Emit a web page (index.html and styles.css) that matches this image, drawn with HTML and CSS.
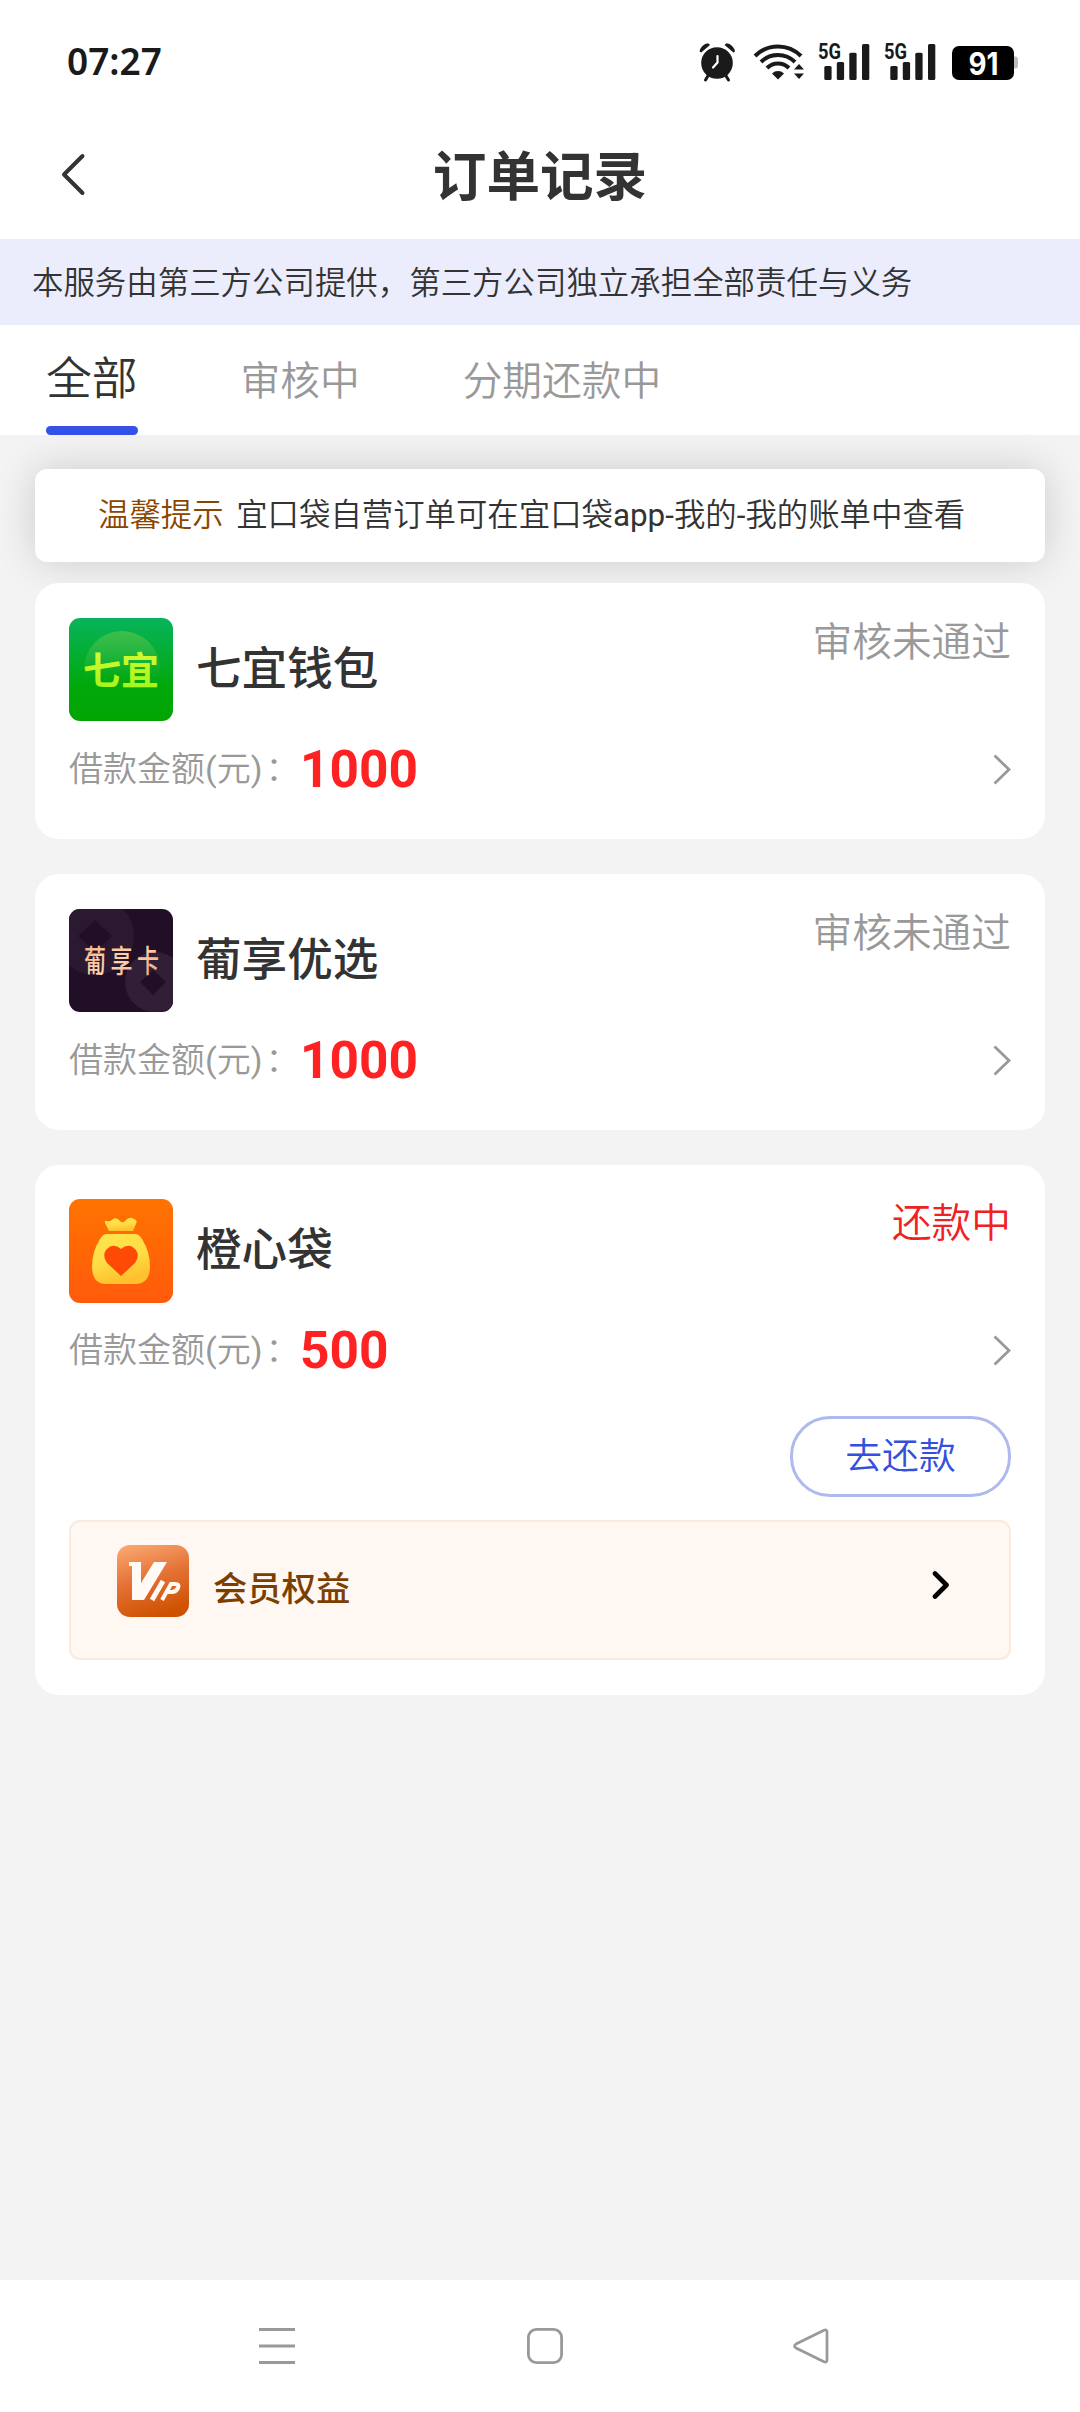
FILE: index.html
```html
<!DOCTYPE html>
<html lang="zh-CN">
<head>
<meta charset="utf-8">
<title>订单记录</title>
<link rel="stylesheet" href="styles.css">
</head>
<body>
<div class="screen">
  <div class="status-bar">
    <span class="clock">07:27</span>
    <svg class="status-icons" width="320" height="50" viewBox="698 37 320 50">
      <g fill="#1a1a1a" stroke="none">
        <circle cx="717" cy="63" r="15.8"/>
        <path d="M699.6 51.5a9.5 9.5 0 0 1 8.6-8.2l1.8 1.6-8.8 7.6z"/>
        <path d="M735 51.500a9.500 9.500 0 0 0-8.600-8.200l-1.800 1.600 8.800 7.600z"/>
      </g>
      <path d="M708.500 75l-3 5M725.500 75l3 5" stroke="#1a1a1a" stroke-width="3" stroke-linecap="round"/>
      <path d="M717.500 56v6.500l-4.500 5" fill="none" stroke="#fff" stroke-width="2.200" stroke-linecap="round"/>
      <g fill="none" stroke="#1a1a1a" stroke-width="4">
        <path d="M755 56a32.500 32.500 0 0 1 46 0"/>
        <path d="M761 62a24 24 0 0 1 34 0"/>
        <path d="M767 68a15.500 15.500 0 0 1 22 0"/>
      </g>
      <path d="M772 73.500a8.500 8.500 0 0 1 12 0l-6 6z" fill="#1a1a1a"/>
      <path d="M794 69.500l5-5.500 5 5.500zM794 73.500l5 5.500 5-5.500z" fill="#1a1a1a"/>
      <g id="signal" fill="#1a1a1a">
        <text class="net" x="818" y="58.700" textLength="23" lengthAdjust="spacingAndGlyphs">5G</text>
        <rect x="824.300" y="66" width="7.300" height="14" rx="1.500"/>
        <rect x="836.800" y="62" width="7.300" height="18" rx="1.500"/>
        <rect x="849.300" y="52.800" width="7.300" height="27.200" rx="1.500"/>
        <rect x="862" y="44" width="7.300" height="36" rx="1.500"/>
      </g>
      <use href="#signal" x="66"/>
      <path d="M1014 56.500h1.500a2.500 2.500 0 0 1 2.500 2.500v7a2.500 2.500 0 0 1-2.500 2.500h-1.500z" fill="#bbb"/>
      <rect x="952" y="46" width="62" height="34" rx="7" fill="#000"/>
      <text class="battery" x="968.500" y="74.500" textLength="30" lengthAdjust="spacingAndGlyphs">91</text>
    </svg>
  </div>

  <header class="title-bar">
    <svg class="back" width="26" height="44" viewBox="0 0 26 44"><path d="M22.500 3L4 21.500 22.500 40" fill="none" stroke="#333" stroke-width="4" stroke-linecap="round" stroke-linejoin="round"/></svg>
    <h1 class="title">订单记录</h1>
  </header>

  <div class="notice">本服务由第三方公司提供，第三方公司独立承担全部责任与义务</div>

  <nav class="tabs">
    <span class="tab tab-active">全部</span>
    <span class="tab">审核中</span>
    <span class="tab">分期还款中</span>
  </nav>

  <main class="content">
    <div class="tip"><span class="tip-label">温馨提示</span> 宜口袋自营订单可在宜口袋<span class="latin">app-</span>我的<span class="latin">-</span>我的账单中查看</div>

    <section class="card">
      <div class="card-head">
        <svg class="logo" width="104" height="103" viewBox="0 0 104 103">
          <defs>
            <linearGradient id="green" x1="0" y1="0" x2="0" y2="1"><stop offset="0" stop-color="#08b45c"/><stop offset=".65" stop-color="#02a80c"/><stop offset="1" stop-color="#03a402"/></linearGradient>
            <linearGradient id="glow" x1="0" y1="0" x2="0" y2="1"><stop offset="0" stop-color="#3fbd48"/><stop offset=".6" stop-color="#3fbd48" stop-opacity="0"/></linearGradient>
            <linearGradient id="lime" x1="0" y1="0" x2="0" y2="1"><stop offset="0" stop-color="#e2fb3a"/><stop offset="1" stop-color="#9cf514"/></linearGradient>
          </defs>
          <rect width="104" height="103" fill="url(#green)"/>
          <circle cx="53" cy="51" r="38" fill="url(#glow)"/>
          <text class="logo-green" x="14" y="66" fill="url(#lime)" textLength="76">七宜</text>
        </svg>
        <span class="name">七宜钱包</span>
        <span class="state">审核未通过</span>
      </div>
      <div class="amount-row">
        <span class="label">借款金额<span class="latin">(</span>元<span class="latin">)</span><span class="colon">：</span></span><span class="amount">1000</span>
        <svg class="arrow" width="18" height="31" viewBox="0 0 18 31"><path d="M1.500 1.500L16 15.500 1.500 29.500" fill="none" stroke="#999" stroke-width="2.800"/></svg>
      </div>
    </section>

    <section class="card">
      <div class="card-head">
        <svg class="logo" width="104" height="103" viewBox="0 0 104 103">
          <defs><linearGradient id="peach" x1="0" y1="0" x2="1" y2="1"><stop offset="0" stop-color="#f6b184"/><stop offset=".5" stop-color="#ffd2ab"/><stop offset="1" stop-color="#e89a6d"/></linearGradient></defs>
          <rect width="104" height="103" fill="#210f27"/>
          <circle cx="26" cy="27" r="39" fill="#2b1932"/>
          <path d="M26 11l17 16-17 16-17-16z" fill="#210f27"/>
          <circle cx="86" cy="73" r="30" fill="#311e37"/>
          <path d="M84 61l13 12-13 13-13-13z" fill="#210f27"/>
          <text class="logo-dark" transform="translate(15 63) scale(1 1.400)" fill="url(#peach)">葡享卡</text>
        </svg>
        <span class="name">葡享优选</span>
        <span class="state">审核未通过</span>
      </div>
      <div class="amount-row">
        <span class="label">借款金额<span class="latin">(</span>元<span class="latin">)</span><span class="colon">：</span></span><span class="amount">1000</span>
        <svg class="arrow" width="18" height="31" viewBox="0 0 18 31"><path d="M1.500 1.500L16 15.500 1.500 29.500" fill="none" stroke="#999" stroke-width="2.800"/></svg>
      </div>
    </section>

    <section class="card card-due">
      <div class="card-head">
        <svg class="logo" width="104" height="104" viewBox="0 0 104 104">
          <defs>
            <linearGradient id="orange" x1="0" y1="0" x2="0" y2="1"><stop offset="0" stop-color="#ff7300"/><stop offset="1" stop-color="#ff5a0c"/></linearGradient>
            <linearGradient id="gold" x1="0" y1="0" x2=".3" y2="1"><stop offset="0" stop-color="#ffe64d"/><stop offset=".6" stop-color="#ffdc44"/><stop offset="1" stop-color="#ffc02e"/></linearGradient>
          </defs>
          <rect width="104" height="104" fill="url(#orange)"/>
          <path d="M40 32l-4-8q-1-3 2-2 3 1 6-2 4-2 7 2 3 3 6-1 4-4 8-1 4 1 2 5l-3 7z" fill="url(#gold)"/>
          <path d="M38 35h28q4 0 7 5 8 13 8 27 0 18-15 18H37q-14 0-14-18 0-14 8-27 3-5 7-5z" fill="url(#gold)"/>
          <path d="M52 77L38 64q-5-7-1-13 7-8 15-1 8-7 15 1 4 6-1 13z" fill="#ff4a05"/>
        </svg>
        <span class="name">橙心袋</span>
        <span class="state state-due">还款中</span>
      </div>
      <div class="amount-row">
        <span class="label">借款金额<span class="latin">(</span>元<span class="latin">)</span><span class="colon">：</span></span><span class="amount">500</span>
        <svg class="arrow" width="18" height="31" viewBox="0 0 18 31"><path d="M1.500 1.500L16 15.500 1.500 29.500" fill="none" stroke="#999" stroke-width="2.800"/></svg>
      </div>
      <div class="actions"><button class="repay" type="button">去还款</button></div>
      <div class="vip">
        <svg width="72" height="72" viewBox="0 0 72 72">
          <defs><linearGradient id="vip" x1=".2" y1="0" x2=".5" y2="1"><stop offset="0" stop-color="#f8a66e"/><stop offset=".5" stop-color="#e47035"/><stop offset="1" stop-color="#ce5200"/></linearGradient></defs>
          <rect width="72" height="72" rx="13" fill="url(#vip)"/>
          <g fill="none" stroke="#fffaf5">
            <path d="M12 17h12v21L37 17h13L27 55H15V21h-3z" stroke="none" fill="#fffaf5"/>
            <path d="M35 55l11-19" stroke-width="5"/>
            <path d="M45 55l9-16h4q5 0 3 4-2 4-6 4h-4" stroke-width="4"/>
          </g>
        </svg>
        <span class="vip-text">会员权益</span>
        <svg class="vip-arrow" width="18" height="30" viewBox="0 0 18 30"><path d="M3 3.500L14.500 15 3 26.500" fill="none" stroke="#000" stroke-width="4.600" stroke-linecap="round" stroke-linejoin="round"/></svg>
      </div>
    </section>
  </main>

  <footer class="system-nav">
    <svg width="36" height="36" viewBox="0 0 36 36"><path d="M0 1.500h36M0 18h36M0 34.500h36" stroke="#999" stroke-width="3"/></svg>
    <svg class="home" width="36" height="36" viewBox="0 0 36 36"><rect x="1.400" y="1.400" width="33.200" height="33.200" rx="8" fill="none" stroke="#999" stroke-width="2.800"/></svg>
    <svg width="36" height="36" viewBox="0 0 36 36"><path d="M31 2.300q3-1.300 3 2v27.400q0 3.300-3 2L3 20q-3-2 0-4z" fill="none" stroke="#999" stroke-width="2.700"/></svg>
  </footer>
</div>
</body>
</html>
```
FILE: styles.css
```css
* { box-sizing: border-box; }
body {
  margin: 0;
  font-family: Roboto, "Noto Sans CJK SC", sans-serif;
  font-weight: 350;
  color: #333;
  background: #fff;
}
svg { display: block; flex: none; }
.latin { font-weight: 400; }
.screen {
  width: 1080px;
  height: 2412px;
  display: flex;
  flex-direction: column;
  background: #f3f3f3;
  overflow: hidden;
}
.status-bar {
  height: 110px;
  padding: 37px 62px 0 67px;
  display: flex;
  align-items: flex-start;
  justify-content: space-between;
  background: #fff;
}
.clock {
  font: 600 37px/48px "Noto Sans", sans-serif;
  color: #1a1a1a;
}
.net { font: 700 22px Roboto, sans-serif; }
.battery { font: 700 31px Inter, sans-serif; fill: #fff; }
.title-bar {
  height: 129px;
  padding: 0 60px;
  display: grid;
  grid-template-columns: 26px 1fr 26px;
  align-items: center;
  background: #fff;
}
.title {
  margin: 0;
  padding-top: 6px;
  text-align: center;
  font-size: 53.6px;
  line-height: 70px;
  font-weight: 700;
}
.notice {
  height: 86px;
  padding-left: 32px;
  background: #ebedfc;
  font-size: 31.45px;
  line-height: 89px;
  white-space: nowrap;
}
.tabs {
  height: 110px;
  padding-left: 46px;
  display: flex;
  gap: 103px;
  background: #fff;
}
.tab {
  font-size: 39.7px;
  line-height: 113px;
  color: #999;
}
.tab-active {
  display: flex;
  flex-direction: column;
  font-size: 45.8px;
  line-height: 110px;
  color: #333;
}
.tab-active::after {
  content: "";
  height: 9px;
  margin-top: -9px;
  border-radius: 4.5px;
  background: #3552e8;
}
.content {
  flex: 1;
  padding: 34px 35px 0;
}
.tip {
  height: 93px;
  margin-bottom: 21px;
  padding-left: 63px;
  border-radius: 12px;
  background: #fff;
  box-shadow: 0 0 40px rgba(0, 0, 0, .16);
  font-size: 31.4px;
  line-height: 94px;
  white-space: nowrap;
}
.tip-label { margin-right: 5px; color: #8a4500; }
.card {
  min-height: 256px;
  margin-bottom: 35px;
  padding: 35px 34px;
  border-radius: 24px;
  background: #fff;
}
.card-due { padding-top: 34px; }
.card-head {
  display: flex;
  align-items: center;
  height: 103px;
}
.logo { border-radius: 11px; }
.logo-green { font: 700 38px "Noto Sans CJK SC", sans-serif; }
.logo-dark { font: 500 22px "Noto Sans CJK SC", sans-serif; letter-spacing: 4.5px; }
.name {
  margin-left: 23px;
  padding-top: 1px;
  font-size: 45.6px;
  line-height: 60px;
  font-weight: 450;
}
.state {
  align-self: flex-start;
  margin-left: auto;
  font-size: 39.7px;
  line-height: 49px;
  color: #999;
}
.state-due { color: #e22; }
.amount-row {
  display: flex;
  align-items: center;
  height: 62px;
  margin-top: 17px;
}
.label {
  width: 231px;
  font-size: 34px;
  line-height: 50px;
  color: #999;
  white-space: nowrap;
}
.colon { margin-left: 3px; }
.amount {
  font-size: 51.4px;
  line-height: 60px;
  font-weight: 700;
  color: #f22;
  padding-top: 1px;
}
.arrow { margin-left: auto; }
.actions {
  display: flex;
  justify-content: flex-end;
  margin-top: 35px;
}
.repay {
  width: 221px;
  height: 81px;
  padding: 0;
  border: 3px solid #aeb9ee;
  border-radius: 40px;
  background: #fff;
  font: 350 36.8px/72px Roboto, "Noto Sans CJK SC", sans-serif;
  color: #3350dd;
}
.vip {
  display: flex;
  height: 140px;
  margin-top: 23px;
  padding: 23px 59px 0 46px;
  border: 2px solid #fbebdf;
  border-radius: 11px;
  background: #fff7f1;
}
.vip-text {
  margin: 19px 0 0 24px;
  font-size: 34.3px;
  line-height: 50px;
  font-weight: 450;
  color: #7d3f00;
}
.vip-arrow { margin: 25px 0 0 auto; }
.system-nav {
  flex: none;
  height: 132px;
  padding: 48px 251px 0 259px;
  display: flex;
  align-items: flex-start;
  justify-content: space-between;
  background: #fff;
}
.home { margin-left: 2px; }
```
